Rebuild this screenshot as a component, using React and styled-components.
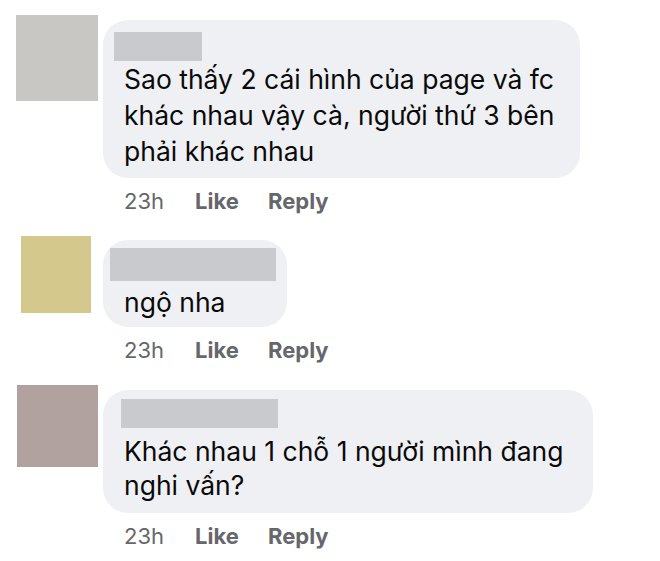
import styled, { createGlobalStyle } from 'styled-components';

const GlobalStyle = createGlobalStyle`
  body {
    margin: 0;
    background: #ffffff;
    font-family: Inter, "Liberation Sans", Arial, sans-serif;
  }
`;

const List = styled.div`
  display: flex;
  flex-direction: column;
  gap: 22px;
  padding-top: 15px;
`;

const Row = styled.div`
  display: grid;
  grid-template-columns: 103px auto;
  align-items: start;
`;

const Avatar = styled.div`
  width: ${(p) => p.$w}px;
  height: ${(p) => p.$h}px;
  margin-left: ${(p) => p.$left}px;
  background: ${(p) => p.$color};
`;

const Body = styled.div`
  display: flex;
  flex-direction: column;
  margin-top: ${(p) => p.$top}px;
`;

const Bubble = styled.div`
  width: ${(p) => p.$width}px;
  box-sizing: border-box;
  padding: ${(p) => p.$pt}px 0 ${(p) => p.$pb}px 21px;
  background: #eff0f4;
  border-radius: 25px;
`;

const NameBlock = styled.div`
  width: ${(p) => p.$w}px;
  height: ${(p) => p.$h}px;
  margin-left: ${(p) => p.$left}px;
  margin-bottom: ${(p) => p.$gap}px;
  background: #c9cacd;
`;

const Line = styled.div`
  font-size: 26.5px;
  line-height: ${(p) => p.$lh || 36}px;
  color: #0a0a0a;
  white-space: nowrap;
`;

const Meta = styled.div`
  display: flex;
  margin-top: 10px;
  padding-left: 21px;
  font-size: 22px;
  line-height: 26px;
  color: #65676b;
`;

const Time = styled.span`
  width: 71px;
`;

const Action = styled.span`
  font-weight: 700;
  width: ${(p) => p.$w}px;
`;

const comments = [
  {
    avatar: { w: 82, h: 86, left: 16, color: '#c8c7c3' },
    top: 5,
    width: 477,
    pt: 12,
    pb: 9,
    name: { w: 88, h: 29, left: -10, gap: 0 },
    lines: [
      'Sao thấy 2 cái hình của page và fc',
      'khác nhau vậy cà, người thứ 3 bên',
      'phải khác nhau',
    ],
  },
  {
    avatar: { w: 70, h: 77, left: 21, color: '#d4c88c' },
    top: 4,
    width: 184,
    pt: 8,
    pb: 7,
    name: { w: 166, h: 33, left: -14, gap: 3 },
    lines: ['ngộ nha'],
  },
  {
    avatar: { w: 81, h: 82, left: 17, color: '#b1a19f' },
    top: 5,
    width: 490,
    pt: 9,
    pb: 11,
    lh: 34,
    name: { w: 157, h: 29, left: -3, gap: 6 },
    lines: ['Khác nhau 1 chỗ 1 người mình đang', 'nghi vấn?'],
  },
];

export default function App() {
  return (
    <>
      <GlobalStyle />
      <List>
        {comments.map((c, i) => (
          <Row key={i}>
            <Avatar $w={c.avatar.w} $h={c.avatar.h} $left={c.avatar.left} $color={c.avatar.color} />
            <Body $top={c.top}>
              <Bubble $width={c.width} $pt={c.pt} $pb={c.pb}>
                <NameBlock $w={c.name.w} $h={c.name.h} $left={c.name.left} $gap={c.name.gap} />
                {c.lines.map((l) => (
                  <Line key={l} $lh={c.lh}>{l}</Line>
                ))}
              </Bubble>
              <Meta>
                <Time>23h</Time>
                <Action $w={73}>Like</Action>
                <Action>Reply</Action>
              </Meta>
            </Body>
          </Row>
        ))}
      </List>
    </>
  );
}
